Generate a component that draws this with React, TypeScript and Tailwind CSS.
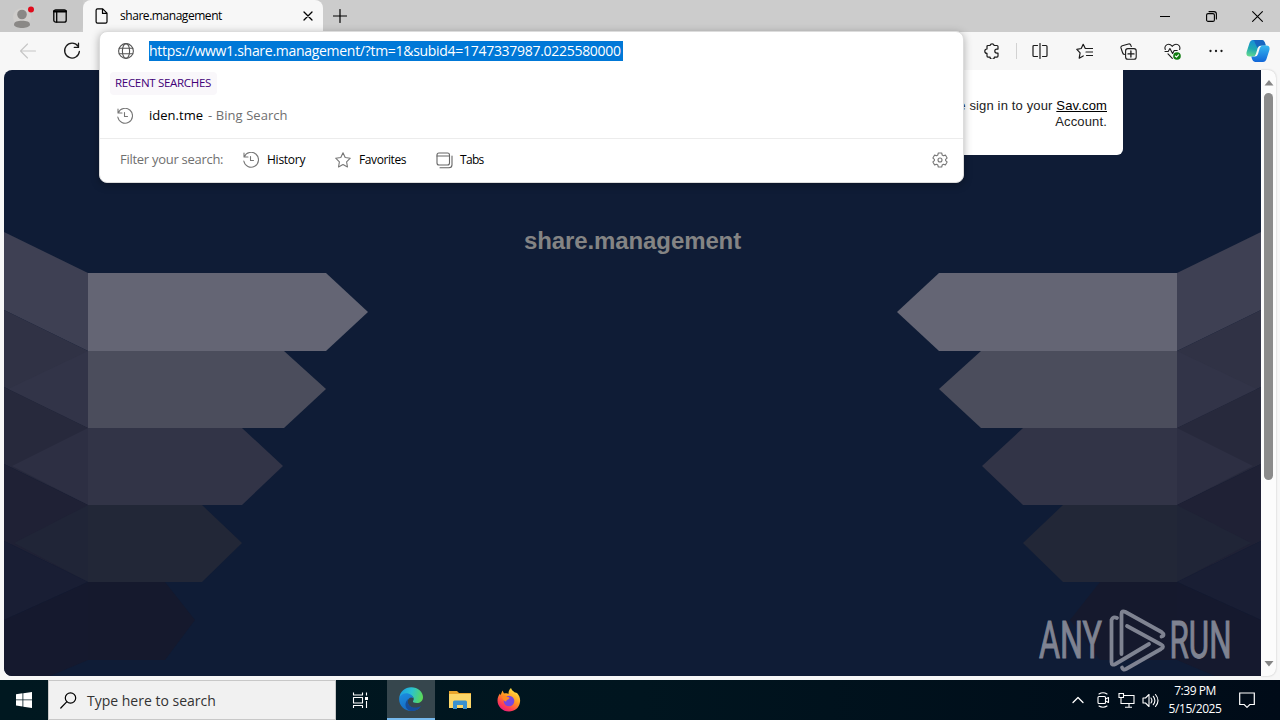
import type { ReactNode } from "react";

function Icon({ size = 16, box = 16, className = "", children }: { size?: number; box?: number; className?: string; children: ReactNode }) {
  return (
    <svg width={size} height={size} viewBox={`0 0 ${box} ${box}`} fill="none" stroke="currentColor" strokeWidth="1.1" strokeLinecap="round" strokeLinejoin="round" className={`shrink-0 ${className}`}>
      {children}
    </svg>
  );
}

function HistoryIcon() {
  return (
    <Icon className="text-[#777]">
      <path d="M1 1v4h4M1.300 4.800A7.400 7.400 0 1 1 .8 9M7.500 4.500v4h3" />
    </Icon>
  );
}

function TabStrip() {
  return (
    <div className="flex h-8 shrink-0 bg-[#cccccc]">
      <div className="flex w-[83px] items-center rounded-br-md bg-[#c8c8c8]">
        <div className="ml-[13px] mt-px">
          <svg width="24" height="28" viewBox="0 0 24 28">
            <circle cx="9" cy="14" r="9" fill="#d0cecc" />
            <circle cx="9" cy="11.500" r="4.800" fill="#8a8886" />
            <path d="M1 22c0-3.500 3.500-4.200 8-4.200s8 .7 8 4.200c-1.500 4-14.500 4-16 0z" fill="#8a8886" />
            <circle cx="18" cy="6.500" r="3" fill="#e00b1c" />
          </svg>
        </div>
        <Icon size={14} box={14} className="ml-4 text-black">
          <rect x=".8" y=".8" width="12.400" height="12.400" rx="2" strokeWidth="1.300" />
          <path d="M1 2.300h12" strokeWidth="2.200" />
          <path d="M3.700 3v10" strokeWidth="1.300" />
        </Icon>
      </div>
      <div className="flex w-[240px] items-center rounded-t-lg bg-[#f7f7f7]">
        <Icon className="ml-[11px] text-black">
          <path d="M3.500.8h5.200l4.300 4.400v8.600q0 1.400-1.400 1.400H3.500q-1.400 0-1.400-1.400V2.200Q2.100.8 3.500.8zM8.500 1v4.400h4.400" strokeWidth="1.200" />
        </Icon>
        <span className="ml-[10px] w-[110px] whitespace-nowrap text-[12px] tracking-[-0.45px] text-black">share.management</span>
        <Icon size={10} box={10} className="ml-[73px] text-black">
          <path d="M1 1l8 8M9 1l-8 8" strokeWidth="1.300" />
        </Icon>
      </div>
      <Icon size={14} box={14} className="ml-[10px] mt-[9px] text-black">
        <path d="M7 .5v13M.5 7h13" strokeWidth="1.200" />
      </Icon>
      <div className="ml-auto flex items-center text-black">
        <Icon size={10} box={10} className="mr-9">
          <path d="M0 5.500h10" />
        </Icon>
        <Icon size={11} box={11} className="mr-[35px]">
          <rect x=".6" y="2.600" width="7.800" height="7.800" rx="1.500" />
          <path d="M3 .6h5q2.400 0 2.400 2.400v5" />
        </Icon>
        <Icon size={11} box={11} className="mr-[17px]">
          <path d="M.6.600l9.800 9.800M10.400.6.600 10.400" />
        </Icon>
      </div>
    </div>
  );
}

function Toolbar() {
  return (
    <div className="flex h-[38px] shrink-0 items-center bg-[#f7f7f7] text-[#1b1b1b]">
      <Icon size={18} box={18} className="ml-[19px] text-[#c6c6c6]">
        <path d="M16.500 9H1.500M8.500 2l-7 7 7 7" />
      </Icon>
      <Icon size={18} box={18} className="ml-[26px]">
        <path d="M15 4.200A7.400 7.400 0 1 0 16.400 9.400M15.500 1.200v4.200h-4.200" strokeWidth="1.300" />
      </Icon>
      <div className="ml-auto flex items-center">
        <Icon size={16}>
          <path d="M4 2.500h2a2.200 2.200 0 0 1 4.200 0H13q1 0 1 1v2.600h-1.200a2 2 0 0 0 0 4H14v3q0 1-1 1h-2.600a2.200 2.200 0 0 1-4.400 0H4q-1 0-1-1v-2.700a2.200 2.200 0 0 1 0-4.400V3.500q0-1 1-1" strokeWidth="1.200" />
        </Icon>
        <div className="ml-[16px] h-4 w-px bg-[#d2d2d2]" />
        <Icon className="ml-[15px]">
          <path d="M5.500 2.500H2q-1 0-1 1v9q0 1 1 1h3.500M10.500 2.500H14q1 0 1 1v9q0 1-1 1h-3.500M8 .5v15" strokeWidth="1.200" />
        </Icon>
        <Icon size={17} box={17} className="ml-[28px]">
          <path d="M10.500 5.500H9.300L7.200 1.300 5.200 5.500.8 6.400l3.300 3.500-.9 5.300 4-2.300M10.500 5.500h6M10 9h6.500M10.500 12.500h6" strokeWidth="1.200" />
        </Icon>
        <Icon size={17} box={17} className="ml-[27px]">
          <path d="M4.500 11.500q-1.600-.3-2-2L1 5Q.6 3.300 2.300 2.800L8.500 1q1.800-.5 2.300 1.200l.5 1.300" />
          <rect x="5.600" y="5.600" width="10.600" height="10.600" rx="2.300" />
          <path d="M10.900 8v6M8 10.900h6" strokeWidth="1.300" />
        </Icon>
        <Icon size={17} box={17} className="ml-[27px]">
          <path d="M1.300 6.500C0 3.500 2.500 1.200 4.700 1.200c2 0 3 1.400 3.600 2.100C9 2.600 10 1.200 12 1.200c2.600 0 4.700 2.400 3.600 5.300M1 8.500h3.200l1.700-3 2.700 5 1.600-3h3M4 10.800l4.300 4.500" />
          <circle cx="13" cy="13" r="3.800" fill="#107c10" stroke="none" />
          <path d="M11.300 13l1.200 1.100 2-2.300" stroke="white" />
        </Icon>
        <Icon size={16} className="ml-[27px]">
          <path d="M2.500 8h.01M8 8h.01M13.500 8h.01" strokeWidth="2.300" />
        </Icon>
        <svg width="24" height="24" viewBox="0 0 24 24" className="ml-[22px] mr-[10px]">
          <defs>
            <linearGradient id="cpA" x1=".3" y1="0" x2="0" y2="1"><stop offset="0" stopColor="#168dd8" /><stop offset=".5" stopColor="#20a9b0" /><stop offset="1" stopColor="#6ce08a" /></linearGradient>
            <linearGradient id="cpB" x1="0" y1="0" x2="0" y2="1"><stop offset="0" stopColor="#35b8f0" /><stop offset="1" stopColor="#1266d8" /></linearGradient>
          </defs>
          <path d="M7 1h9q2 0 3 3l.7 2.500H15q-2.500 0-3.300 2.500l-1.800 6q-.8 2.500-3 2.500H3.500Q-.3 17.500.6 13L3.500 4Q4.500 1 7 1z" fill="url(#cpA)" />
          <path d="M7 1h9q2 0 3 3l.7 2.500H15Q12 6.500 11.500 9L9 4Q8.500 1 7 1z" fill="#1766c0" />
          <path d="M17 23H9q-2 0-3-3l-.7-2.500H9q2.200 0 3-2.500l1.800-6q.8-2.500 3.200-2.500h3.500q3.800 0 2.900 4.500L20.500 20Q19.500 23 17 23z" fill="url(#cpB)" />
        </svg>
      </div>
    </div>
  );
}

const bands = [
  { face: "88,273 326,273 368,312 326,351 88,351", fill: "#646574", side: "4,232 88,273 88,351 4,310", sideFill: "#3e4053", fold: "", foldFill: "none" },
  { face: "88,351 284,351 326,389 284,428 88,428", fill: "#4b4d5c", side: "4,310 88,351 88,428 4,387", sideFill: "#303245", fold: "8,389 88,351 88,428", foldFill: "#323448" },
  { face: "88,428 242,428 283,466 242,505 88,505", fill: "#323447", side: "4,387 88,428 88,505 4,464", sideFill: "#27293c", fold: "12,466 88,428 88,505", foldFill: "#2d2f43" },
  { face: "88,505 202,505 242,543 202,582 88,582", fill: "#222737", side: "4,464 88,505 88,582 4,541", sideFill: "#1f2135", fold: "14,543 88,505 88,582", foldFill: "#202537" },
  { face: "88,582 165,582 195,620 165,660 88,660", fill: "#15192d", side: "4,541 88,582 4,620", sideFill: "#191e34", fold: "4,620 88,582 88,660 50,676 4,676", foldFill: "#15192e" },
];

function Prisms() {
  return (
    <g>
      {bands.map((b) => (
        <g key={b.face}>
          <polygon points={b.side} fill={b.sideFill} />
          {b.fold && <polygon points={b.fold} fill={b.foldFill} />}
          <polygon points={b.face} fill={b.fill} />
        </g>
      ))}
    </g>
  );
}

function Watermark() {
  return (
    <div className="absolute bottom-[4px] right-[20px] opacity-95">
      <svg width="204" height="64" viewBox="0 0 204 64" fill="#858997">
        <g stroke="#858997" strokeWidth="1.100">
          <text x="2" y="49.500" fontFamily="Roboto, sans-serif" fontSize="52" textLength="63" lengthAdjust="spacingAndGlyphs">ANY</text>
          <text x="132.500" y="49.500" fontFamily="Roboto, sans-serif" fontSize="52" textLength="62" lengthAdjust="spacingAndGlyphs">RUN</text>
        </g>
        <g fill="none" stroke="#858997" strokeWidth="3.800" strokeLinecap="round" strokeLinejoin="round">
          <path d="M80 10q-4-2-5.500 2v42q0 4 4 2L112 36" />
          <path d="M84.500 46V6q0-4 4-2l36 20q4 3 0 4.500" />
          <path d="M90 18l34 18.500q4 2 0 4.500L89 61q-3 1.500-4-1.500" />
        </g>
      </svg>
    </div>
  );
}

function PageView() {
  return (
    <div className="flex h-[606px] shrink-0 pl-1">
      <div className="relative w-[1257px] overflow-hidden rounded-l-lg bg-[#0f1c36]">
        <svg className="absolute inset-0" width="1257" height="606" viewBox="4 70 1257 606">
          <Prisms />
          <g transform="translate(1265 0) scale(-1 1)"><Prisms /></g>
        </svg>
        <div className="relative flex flex-col">
          <div className="ml-[138px] flex h-[85px] w-[981px] justify-end rounded-b-[6px] bg-white pr-4 pt-[28px] text-right font-['Liberation_Sans',sans-serif] text-[13px] leading-4 tracking-[0.15px] text-[#222]">
            <p>Please sign in to your <span className="text-black underline">Sav.com</span><br />Account.</p>
          </div>
          <h1 className="mt-[70px] w-[1257px] text-center font-['Liberation_Sans',sans-serif] text-[24px] font-bold leading-8 tracking-[-0.1px] text-[#848484]">share.management</h1>
        </div>
        <Watermark />
      </div>
      <div className="flex w-[15px] flex-col items-center rounded-r-lg bg-[#fcfcfc] shadow-[0_0_2px_#bbb]">
        <svg width="10" height="6" viewBox="0 0 10 6" className="mt-[10px]"><path d="M5 0l4.500 5.500h-9z" fill="#858585" /></svg>
        <div className="mt-[7px] h-[387px] w-[9px] rounded-full bg-[#8b8b8b]" />
        <svg width="10" height="6" viewBox="0 0 10 6" className="mb-[9px] mt-auto"><path d="M5 5.500L.5 0h9z" fill="#858585" /></svg>
      </div>
    </div>
  );
}

function AddressPopup() {
  return (
    <div className="absolute left-[99px] top-[31px] flex h-[152px] w-[865px] flex-col rounded-lg border border-[#dcdcdc] bg-white shadow-[0_2px_8px_rgba(0,0,0,0.3)]">
      <div className="flex h-[38px] items-center">
        <Icon className="ml-[18px] text-[#555]">
          <circle cx="8" cy="8" r="7.400" />
          <ellipse cx="8" cy="8" rx="3.600" ry="7.400" />
          <path d="M1.200 5.300h13.600M1.200 10.700h13.600" />
        </Icon>
        <span className="ml-[15px] h-5 w-[474px] whitespace-nowrap bg-[#0078d7] text-[14px] leading-5 tracking-[-0.29px] text-white">https://www1.share.management/?tm=1&amp;subid4=1747337987.0225580000</span>
      </div>
      <div className="ml-[10px] mt-[2px] flex h-[23px] w-[107px] items-center rounded-sm bg-[#f9f7fa] pl-[5px]">
        <span className="mb-[2px] whitespace-nowrap text-[11.500px] tracking-[-0.3px] text-[#420078]">RECENT SEARCHES</span>
      </div>
      <div className="mt-[9px] flex h-6 items-center">
        <span className="ml-[17px]"><HistoryIcon /></span>
        <span className="ml-[16px] flex whitespace-nowrap text-[13px] tracking-[0.02px] text-black">iden.tme<span className="ml-[5px] tracking-[0.06px] text-[#6f6f6f]">- Bing Search</span></span>
      </div>
      <div className="mt-[10px] flex h-[43px] items-center border-t border-[#ececec] text-[12px] text-black">
        <span className="ml-5 w-[104px] whitespace-nowrap text-[13px] tracking-[-0.28px] text-[#6f6f6f]">Filter your search:</span>
        <span className="ml-[19px]"><HistoryIcon /></span>
        <span className="ml-2 w-[40px] tracking-[-0.25px]">History</span>
        <Icon className="ml-[28px] text-[#777]">
          <path d="M8 .8l2.200 4.700 5.100.7-3.700 3.600.9 5.200L8 12.500l-4.500 2.500.9-5.200L.7 6.200l5.100-.7z" />
        </Icon>
        <span className="ml-2 w-[48px] tracking-[-0.4px]">Favorites</span>
        <Icon size={17} box={17} className="ml-[29px] text-[#666]">
          <rect x="1" y="1" width="12.500" height="12" rx="2" />
          <path d="M1 4h12.500M4 15.800h9q3 0 3-3V4" />
        </Icon>
        <span className="ml-[7px] tracking-[-0.7px]">Tabs</span>
        <Icon className="ml-auto mr-[15px] text-[#777]">
          <path d="M6.300 1h3.400l.5 2 1.200.7 2-.6 1.700 3-1.500 1.300v1.200l1.500 1.300-1.700 3-2-.6-1.200.7-.5 2H6.300l-.5-2-1.200-.7-2 .6-1.700-3 1.500-1.300V7.400L.9 6.100l1.700-3 2 .6L5.800 3z" />
          <circle cx="8" cy="8" r="2" />
        </Icon>
      </div>
    </div>
  );
}

function Taskbar() {
  return (
    <div className="flex h-10 shrink-0 bg-linear-to-r from-[#001820] via-[#00151f] to-[#000b18] text-white">
      <div className="flex w-12 items-center justify-center">
        <svg width="16" height="16" viewBox="0 0 16 16" fill="white"><path d="M0 2.300l6.500-1v6.200H0zM7.300 1.200L16 0v7.500H7.300zM0 8.300h6.500v6.200l-6.500-1zM7.300 8.300H16V16l-8.700-1.300z" /></svg>
      </div>
      <div className="flex w-72 items-center border border-[#c8c8c8] bg-[#f1f1f1] text-[#333]">
        <Icon size={17} box={17} className="ml-[11px] text-black">
          <circle cx="10.500" cy="6" r="5.200" strokeWidth="1.200" />
          <path d="M6.700 9.800L.8 16" strokeWidth="1.200" />
        </Icon>
        <span className="ml-[10px] text-[14px]">Type here to search</span>
      </div>
      <div className="flex w-[51px] items-center justify-center pr-[3px]">
        <Icon size={17} box={17}>
          <path d="M1.500.5v2.500h9V.5M1.500 16v-2.500h9V16M1.500 5.500h9v5.500h-9zM14.500.5v3M14.500 9v7" strokeLinecap="butt" />
          <path d="M13 5h3v3h-3z" fill="white" stroke="none" />
        </Icon>
      </div>
      <div className="flex w-12 items-center justify-center border-b-2 border-[#76b9ed] bg-[#36464d]">
        <svg width="24" height="24" viewBox="0 0 24 24">
          <defs>
            <linearGradient id="edA" x1="0" y1=".3" x2="1" y2=".5"><stop offset="0" stopColor="#1b9de2" /><stop offset=".5" stopColor="#2bc2cf" /><stop offset="1" stopColor="#5bd957" /></linearGradient>
            <linearGradient id="edB" x1="0" y1="0" x2=".5" y2="1"><stop offset="0" stopColor="#1b8ee0" /><stop offset="1" stopColor="#1668c0" /></linearGradient>
          </defs>
          <path d="M.2 11C1 4.500 6 .2 12.200.2 19 .2 24 5 24 10c0 4-3 6-6 6-3 0-4.500-1-4-2 1.800-2 .5-5.500-3.500-5.800C6 8 2 9 .2 11z" fill="url(#edA)" />
          <path d="M.2 11c1.500-3.500 5-5.300 9-4.500 2.800.5 5 2.500 5 4.500-2.500-1.700-5.700.5-5.500 4 .2 4 4 6.500 8 6.300 2-.1 3.500-.8 5-1.800-2.500 3.500-6 4.500-9.500 4.500C5 24-.6 18 .2 11z" fill="url(#edB)" />
          <path d="M9 12c-1.500 7 5 11 13 7-2 3.500-5.500 5-9 5-6 0-9-7-4-12z" fill="#164d9b" />
        </svg>
      </div>
      <div className="flex w-[50px] items-center justify-center">
        <svg width="22" height="20" viewBox="0 0 22 20">
          <path d="M0 1h8l2 2h12v4H0z" fill="#e9a52c" />
          <path d="M0 4h22v14H0z" fill="#fcd668" />
          <path d="M4 19v-7q0-1.500 1.500-1.500h11q1.500 0 1.500 1.500v7h-4v-4H8v4z" fill="#3a91cf" />
        </svg>
      </div>
      <div className="flex w-12 items-center justify-center">
        <svg width="24" height="24" viewBox="0 0 24 24">
          <defs>
            <linearGradient id="ffA" x1=".8" y1="0" x2=".2" y2="1"><stop offset="0" stopColor="#fff04a" /><stop offset=".45" stopColor="#ff9520" /><stop offset=".75" stopColor="#ff4050" /><stop offset="1" stopColor="#e51486" /></linearGradient>
          </defs>
          <path d="M14 0c.5 2 2 3 3.500 4.200L20 5c2.500 3 3.500 5.500 3 9-.8 6-5.500 9.500-11 9.500C5.500 23.500.5 18.500.5 12.500c0-3 1-5 2.500-7l.5 1.700L5.500 2.500 7 5.500c2-.5 4 0 4.500.6C11.500 3.500 12 1.500 14 0z" fill="url(#ffA)" />
          <circle cx="12" cy="13" r="5.300" fill="#7547df" />
          <path d="M5 9c2-2 4-1 5.500 0 2.500.3 2.500 1.500 1 2.200-2 .5-2 1.500-2.500 2.500-2-.5-3.500-2.500-4-4.700z" fill="#ff8a22" />
        </svg>
      </div>
      <div className="ml-auto flex items-center">
        <Icon size={12} box={12} className="mr-[11px]"><path d="M1 8.500L6 3.500l5 5" strokeWidth="1.300" /></Icon>
        <Icon size={16} className="mr-[7px]">
          <rect x="3" y="4.500" width="7.500" height="7" rx="1" />
          <path d="M10.500 7l3-1.500v5l-3-1.500M4 2q4-2.500 8 0M4 14q4 2.500 8 0" />
        </Icon>
        <Icon size={17} box={17} className="mr-[7px]">
          <path d="M6 3.500h10v8H6M11 11.500V15M7 15.300h7M3 5.500v6h3M1 1.500h4.500v4H1z" strokeLinecap="butt" strokeLinejoin="miter" />
        </Icon>
        <Icon size={17} box={17} className="mr-[6px]">
          <path d="M1 6h2.500L7 2.500v12L3.500 11H1zM9 6q1.800 2.500 0 5M11.300 4.300q3.200 4.200 0 8.400M13.500 2.500q5 6 0 12" />
        </Icon>
        <div className="flex w-[60px] flex-col items-center whitespace-nowrap text-[12px] leading-[18px] tracking-[-0.45px]">
          <span>7:39 PM</span>
          <span>5/15/2025</span>
        </div>
        <Icon size={16} className="ml-[14px] mr-[25px]">
          <path d="M.7 1h14.600v11.500h-4.500L8 15.300l-2.800-2.800H.7z" strokeLinejoin="miter" strokeWidth="1.200" />
        </Icon>
      </div>
    </div>
  );
}

export default function App() {
  return (
    <div className="relative flex h-[720px] w-[1280px] flex-col overflow-hidden bg-[#f7f7f7] font-['Open_Sans','Noto_Sans',sans-serif]">
      <TabStrip />
      <Toolbar />
      <PageView />
      <div className="h-1 shrink-0" />
      <Taskbar />
      <AddressPopup />
    </div>
  );
}
